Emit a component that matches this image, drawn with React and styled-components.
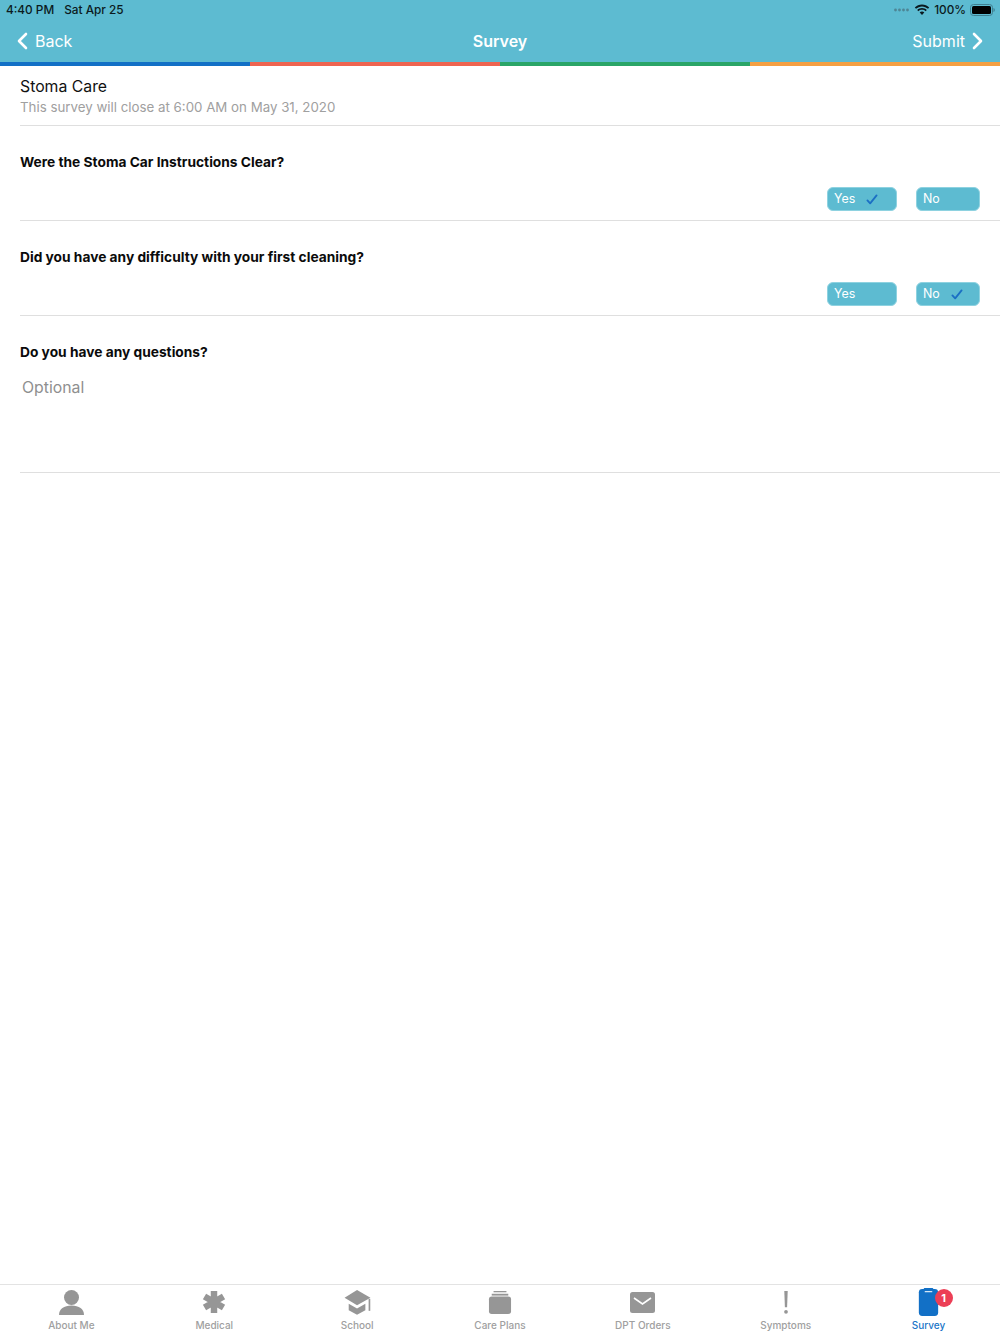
import React from "react";
import styled, { createGlobalStyle } from "styled-components";

const Global = createGlobalStyle`
  html, body { margin: 0; padding: 0; background: #fff; }
  body { font-family: Inter, "Liberation Sans", sans-serif; }
`;
const Page = styled.div`
  width: 1000px; height: 1334px; display: flex; flex-direction: column; background: #fff; overflow: hidden;
`;
const Header = styled.header`
  height: 62px; flex: none; background: #5dbbd1; color: #fff; display: flex; flex-direction: column;
`;
const StatusBar = styled.div`
  height: 20px; padding: 0 5px 0 6px; display: flex; align-items: center; justify-content: space-between;
  font-size: 11.8px; font-weight: 500; color: #0b1a20; line-height: 20px;
`;
const StatusLeft = styled.div`display: flex; gap: 10px;`;
const StatusRight = styled.div`display: flex; align-items: center; gap: 4px;`;
const NavBar = styled.nav`
  flex: 1; display: grid; grid-template-columns: 1fr auto 1fr; align-items: center; padding: 0 16px;
  font-size: 16px; line-height: 22px; margin-top: -1px;
`;
const NavButton = styled.div`
  display: flex; align-items: center; gap: 7px; justify-content: ${p => (p.$end ? "flex-end" : "flex-start")};
`;
const NavTitle = styled.div`font-weight: 600; font-size: 16px;`;
const ColorStrip = styled.div`display: flex; height: 4px; flex: none;`;
const ColorSegment = styled.div`flex: 1; background: ${p => p.$color};`;
const Content = styled.main`flex: 1; padding-left: 20px; display: flex; flex-direction: column;`;
const Intro = styled.section`
  height: 60px; box-sizing: border-box; padding-top: 10px; border-bottom: 1px solid #dfdfdf;
`;
const SurveyTitle = styled.h1`
  margin: 0; font-size: 15.8px; font-weight: 400; line-height: 22px; color: #111;
`;
const SurveyNote = styled.p`
  margin: 0; font-size: 13.3px; font-weight: 400; line-height: 19px; color: #a0a0a0;
`;
const Question = styled.section`
  height: ${p => p.$height}px; box-sizing: border-box; border-bottom: 1px solid #dfdfdf; padding-top: 27px;
`;
const QuestionText = styled.h2`
  margin: 0; font-size: 13.75px; font-weight: 700; line-height: 18px; color: #0b0b0b;
`;
const Answers = styled.div`
  display: flex; justify-content: flex-end; gap: 19px; padding-right: 20px; margin-top: 16px;
`;
const Answer = styled.div`
  width: ${p => p.$width}px; height: 24px; box-sizing: border-box; padding: 0 6px; border-radius: 6px;
  background: #5dbbd1; border: 1px solid #8ed2e0; color: #fff; font-size: 12.4px; line-height: 22px;
  display: flex; align-items: center; gap: 11px;
`;
const Optional = styled.div`
  margin: 16px 0 0 2px; font-size: 15.8px; line-height: 22px; color: #8f8f8f;
`;
const TabBar = styled.footer`
  height: 50px; box-sizing: border-box; flex: none; display: grid; grid-template-columns: repeat(7, 1fr);
  border-top: 1px solid #e3e3e3;
`;
const Tab = styled.div`
  display: flex; flex-direction: column; align-items: center; position: relative;
  color: ${p => (p.$active ? "#1b76c8" : "#a0a0a0")}; font-size: 10px; font-weight: 500;
`;
const TabIcon = styled.div`
  height: 34px; width: 36px; display: flex; align-items: center; justify-content: center; position: relative;
  color: ${p => (p.$active ? "#1270c6" : "#969696")};
`;
const TabLabel = styled.div`line-height: 12px;`;
const Badge = styled.div`
  position: absolute; top: 4px; right: -6px; width: 18px; height: 18px; border-radius: 50%; background: #ec3f56;
  color: #fff; font-size: 11px; font-weight: 700; line-height: 18px; text-align: center;
`;

const Chevron = ({ left }) => (
  <svg width="12" height="18" viewBox="0 0 12 18" fill="none" stroke="#fff" strokeWidth="2.6" strokeLinecap="round" strokeLinejoin="round">
    <path d={left ? "M10 2 L3 9 L10 16" : "M2 2 L9 9 L2 16"} />
  </svg>
);
const Check = () => (
  <svg width="12" height="11" viewBox="0 0 13 12" fill="none" stroke="#1b6fc4" strokeWidth="2" strokeLinecap="round" strokeLinejoin="round">
    <path d="M1.5 7 L4.5 10.2 L11.5 1.5" />
  </svg>
);
const Wifi = () => (
  <svg width="16" height="12" viewBox="0 0 16 12" fill="#0b1a20">
    <path d="M8 2.4c2.3 0 4.4.9 6 2.4l1.2-1.3C13.300 1.700 10.800.6 8 .6S2.700 1.700.8 3.500L2 4.800c1.600-1.500 3.700-2.400 6-2.400z" />
    <path d="M8 5.800c1.400 0 2.600.5 3.600 1.400l1.200-1.300C11.500 4.700 9.800 4 8 4s-3.500.7-4.800 1.900l1.200 1.300c1-.9 2.200-1.400 3.600-1.400z" />
    <path d="M8 7.500c-.9 0-1.700.3-2.300.9L8 11l2.300-2.600C9.700 7.800 8.900 7.500 8 7.500z" />
  </svg>
);
const Signal = () => (
  <svg width="16" height="4" viewBox="0 0 16 4" fill="#4d8595">
    <circle cx="1.500" cy="2" r="1.400" /><circle cx="5.500" cy="2" r="1.400" /><circle cx="9.500" cy="2" r="1.400" /><circle cx="13.500" cy="2" r="1.400" />
  </svg>
);
const Battery = () => (
  <svg width="25" height="12" viewBox="0 0 25 12">
    <rect x="0.500" y="0.500" width="22" height="11" rx="3" fill="none" stroke="#3f7f90" />
    <rect x="2" y="2" width="19" height="8" rx="1.500" fill="#000" />
    <path d="M23.500 4v4c.8-.3 1.300-1 1.300-2s-.5-1.700-1.300-2z" fill="#3f7f90" />
  </svg>
);
const Person = () => (
  <svg width="25" height="25" viewBox="0 0 25 25" fill="currentColor">
    <circle cx="12.500" cy="7.500" r="7.500" />
    <path d="M0 25c0-6 5-9.500 12.500-9.500S25 19 25 25z" />
  </svg>
);
const Asterisk = () => (
  <svg width="24" height="24" viewBox="0 0 24 26" fill="none" stroke="currentColor" strokeWidth="7">
    <path d="M12 1 V25 M1.700 7 L22.300 19 M22.300 7 L1.700 19" />
  </svg>
);
const Cap = () => (
  <svg width="29" height="25" viewBox="0.500 0 29 27" fill="currentColor">
    <path d="M14.500 0 L29 8.300 L14.500 16.500 L1 8.300 z" />
    <path d="M5.500 14.800 L14.500 20 L23.500 14.800 V22 L14.500 26.800 L5.500 22 z" />
    <rect x="27" y="9.500" width="1.800" height="13" />
  </svg>
);
const Folder = () => (
  <svg width="24" height="23" viewBox="0 0 24 25" fill="currentColor">
    <rect x="5" y="0" width="14" height="1.400" />
    <rect x="3" y="3" width="18" height="2" />
    <rect x="0" y="6" width="24" height="19" rx="3" />
  </svg>
);
const Mail = () => (
  <svg width="25" height="21" viewBox="0 0 25 21">
    <rect x="0" y="0" width="25" height="21" rx="2.500" fill="currentColor" />
    <path d="M4 6 L12.500 12 L21 6" fill="none" stroke="#fff" strokeWidth="1.600" />
  </svg>
);
const Exclaim = () => (
  <svg width="6" height="23" viewBox="0 0 6 27" fill="currentColor">
    <path d="M1 0 H5 L4.300 19 H1.700 z" />
    <circle cx="3" cy="24.500" r="2.200" />
  </svg>
);
const Clipboard = () => (
  <svg width="21" height="28" viewBox="0 0 20 29">
    <rect x="0" y="1" width="20" height="28" rx="3.500" fill="currentColor" />
    <rect x="5" y="0" width="10" height="3" rx="1" fill="currentColor" />
    <rect x="6" y="3" width="8" height="1.500" rx="0.700" fill="#d5e6f6" />
  </svg>
);

const strip = ["#1270c6", "#ee6450", "#2aa567", "#f5a043"];
const tabs = [
  ["About Me", <Person />], ["Medical", <Asterisk />], ["School", <Cap />], ["Care Plans", <Folder />],
  ["DPT Orders", <Mail />], ["Symptoms", <Exclaim />], ["Survey", <Clipboard />, true],
];

const YesNo = ({ picked }) => (
  <Answers>
    <Answer $width={70}>Yes{picked === "yes" && <Check />}</Answer>
    <Answer $width={64}>No{picked === "no" && <Check />}</Answer>
  </Answers>
);

export default function App() {
  return (
    <Page>
      <Global />
      <Header>
        <StatusBar>
          <StatusLeft><span>4:40 PM</span><span>Sat Apr 25</span></StatusLeft>
          <StatusRight><Signal /><Wifi /><span>100%</span><Battery /></StatusRight>
        </StatusBar>
        <NavBar>
          <NavButton><Chevron left />Back</NavButton>
          <NavTitle>Survey</NavTitle>
          <NavButton $end>Submit<Chevron /></NavButton>
        </NavBar>
      </Header>
      <ColorStrip>{strip.map(c => <ColorSegment key={c} $color={c} />)}</ColorStrip>
      <Content>
        <Intro>
          <SurveyTitle>Stoma Care</SurveyTitle>
          <SurveyNote>This survey will close at 6:00 AM on May 31, 2020</SurveyNote>
        </Intro>
        <Question $height={95}>
          <QuestionText>Were the Stoma Car Instructions Clear?</QuestionText>
          <YesNo picked="yes" />
        </Question>
        <Question $height={95}>
          <QuestionText>Did you have any difficulty with your first cleaning?</QuestionText>
          <YesNo picked="no" />
        </Question>
        <Question $height={157}>
          <QuestionText>Do you have any questions?</QuestionText>
          <Optional>Optional</Optional>
        </Question>
      </Content>
      <TabBar>
        {tabs.map(([label, icon, active]) => (
          <Tab key={label} $active={active}>
            <TabIcon $active={active}>{icon}{active && <Badge>1</Badge>}</TabIcon>
            <TabLabel>{label}</TabLabel>
          </Tab>
        ))}
      </TabBar>
    </Page>
  );
}
